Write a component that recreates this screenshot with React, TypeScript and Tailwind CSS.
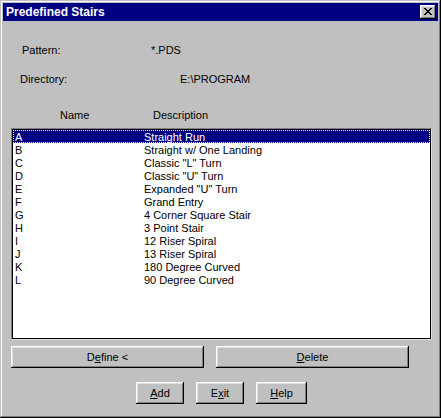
const stairs = [
  ['A', 'Straight Run'],
  ['B', 'Straight w/ One Landing'],
  ['C', 'Classic "L" Turn'],
  ['D', 'Classic "U" Turn'],
  ['E', 'Expanded "U" Turn'],
  ['F', 'Grand Entry'],
  ['G', '4 Corner Square Stair'],
  ['H', '3 Point Stair'],
  ['I', '12 Riser Spiral'],
  ['J', '13 Riser Spiral'],
  ['K', '180 Degree Curved'],
  ['L', '90 Degree Curved'],
];

const bevel =
  'shadow-[inset_-1px_-1px_#000,inset_1px_1px_#fff,inset_-2px_-2px_#808080,inset_2px_2px_#dfdfdf]';

const Button = ({ className, children }: { className: string; children: React.ReactNode }) => (
  <button
    className={`h-[22px] bg-[#c0c0c0] flex items-center justify-center leading-[13px] text-black ${bevel} ${className}`}
  >
    {children}
  </button>
);

export default function App() {
  return (
    <div className="w-[441px] h-[418px] bg-[#c0c0c0] p-[3px] flex flex-col text-[11px] text-black font-['Liberation_Sans',Arial,sans-serif] shadow-[inset_-1px_-1px_#000,inset_1px_1px_#c0c0c0,inset_-2px_-2px_#808080,inset_2px_2px_#fff]">
      {/* Title bar */}
      <div className="h-[18px] bg-[#000080] flex items-center justify-between pl-[3px] pr-[2px]">
        <span className="text-white font-bold text-[12px] leading-[18px]">Predefined Stairs</span>
        <div className={`w-[16px] h-[14px] bg-[#c0c0c0] flex items-center justify-center pb-px pr-px ${bevel}`}>
          <svg width="8" height="7" viewBox="0 0 8 7" shapeRendering="crispEdges">
            <path d="M0 0h2v1h-2zM6 0h2v1h-2zM1 1h2v1h-2zM5 1h2v1h-2zM2 2h4v1h-4zM3 3h2v1h-2zM2 4h4v1h-4zM1 5h2v1h-2zM5 5h2v1h-2zM0 6h2v1h-2zM6 6h2v1h-2z" fill="#000" />
          </svg>
        </div>
      </div>

      {/* Info */}
      <div className="flex h-[13px] leading-[13px] mt-[23px]">
        <span className="ml-[19px] w-[129px]">Pattern:</span>
        <span>*.PDS</span>
      </div>
      <div className="flex h-[13px] leading-[13px] mt-[16px]">
        <span className="ml-[17px] w-[160px]">Directory:</span>
        <span>E:\PROGRAM</span>
      </div>
      <div className="flex h-[13px] leading-[13px] mt-[23px]">
        <span className="ml-[57px] w-[93px]">Name</span>
        <span>Description</span>
      </div>

      {/* List */}
      <div className="ml-[8px] mt-[6px] w-[421px] h-[212px] border border-t-[#808080] border-l-[#808080] border-r-[#dfdfdf] border-b-[#dfdfdf]">
        <div className="w-full h-full border border-black bg-white">
          {stairs.map(([letter, desc], i) => (
            <div
              key={letter}
              className={`flex h-[13px] pt-px leading-[12px] pl-[2px] ${
                i === 0
                  ? 'bg-[#000080] text-white outline-1 outline-dotted outline-[#ffff80] -outline-offset-1'
                  : ''
              }`}
            >
              <span className="w-[129px]">{letter}</span>
              <span>{desc}</span>
            </div>
          ))}
        </div>
      </div>

      {/* Define / Delete */}
      <div className="flex gap-[12px] ml-[8px] mt-[6px]">
        <Button className="w-[193px]">
          D<u>e</u>fine &lt;
        </Button>
        <Button className="w-[193px]">
          <u>D</u>elete
        </Button>
      </div>

      {/* Bottom buttons */}
      <div className="flex gap-[12px] ml-[133px] mt-[14px]">
        <Button className="w-[48px]">
          <u>A</u>dd
        </Button>
        <Button className="w-[48px]">
          E<u>x</u>it
        </Button>
        <Button className="w-[51px]">
          <u>H</u>elp
        </Button>
      </div>
    </div>
  );
}
